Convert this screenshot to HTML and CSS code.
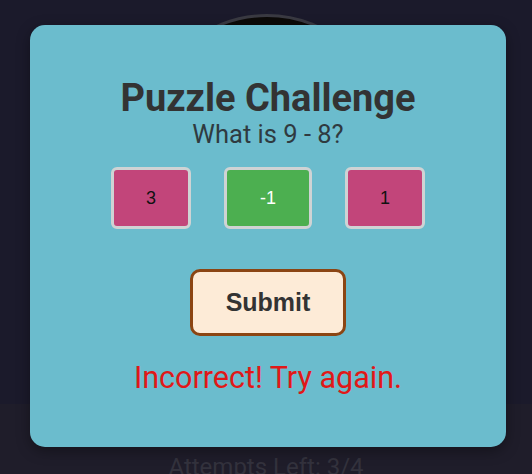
FILE: index.html
```html
<!DOCTYPE html>
<html>
<head>
<meta charset="utf-8">
<link rel="stylesheet" href="styles.css">
</head>
<body>
<div class="stage">
  <div class="board"><div class="disc"></div></div>
  <div class="footer">Attempts Left: 3/4</div>
</div>
<div class="overlay">
  <div class="modal">
    <h2 class="title">Puzzle Challenge</h2>
    <p class="question">What is 9 - 8?</p>
    <div class="options">
      <button class="opt">3</button>
      <button class="opt selected">-1</button>
      <button class="opt">1</button>
    </div>
    <button class="submit">Submit</button>
    <p class="message">Incorrect! Try again.</p>
  </div>
</div>
</body>
</html>
```
FILE: styles.css
```css
html, body {
  margin: 0;
  padding: 0;
  width: 532px;
  height: 474px;
  overflow: hidden;
  background: #1b1a2b;
  font-family: Roboto, "Liberation Sans", sans-serif;
}
.stage {
  height: 474px;
  display: flex;
  flex-direction: column;
}
.board {
  flex: 1;
  display: flex;
  justify-content: center;
  padding-top: 14px;
  padding-left: 2px;
}
.disc {
  width: 242px;
  height: 242px;
  border-radius: 50%;
  border: 3px solid #3a3a42;
  background: radial-gradient(circle at 45% 20%, #0c0a08 0%, #0c0a08 30%, #15141c 60%);
}
.footer {
  height: 70px;
  flex: none;
  background: #1f1d2a;
  color: #33323d;
  font-size: 24px;
  text-align: center;
  line-height: 28px;
  padding-top: 49px;
  box-sizing: border-box;
}
.overlay {
  position: absolute;
  inset: 0;
  display: flex;
  align-items: flex-start;
  padding: 25px 0 0 30px;
}
.modal {
  width: 476px;
  height: 422px;
  box-sizing: border-box;
  background: #6bbccd;
  border-radius: 15px;
  box-shadow: 0 4px 14px rgba(0, 0, 0, 0.35);
  display: flex;
  flex-direction: column;
  align-items: center;
  padding-top: 51px;
}
.title {
  margin: 0;
  font-size: 38px;
  font-weight: 700;
  color: #333333;
  line-height: 44px;
}
.question {
  margin: -1px 0 0;
  font-size: 25.5px;
  color: #2f3a40;
  line-height: 30px;
}
.options {
  display: flex;
  gap: 33px;
  margin-top: 18px;
}
.opt {
  font-family: "Liberation Sans", Arial, sans-serif;
  font-size: 18px;
  line-height: 21px;
  height: 62px;
  padding: 0 32px;
  border: 3px solid #cfd3d4;
  border-radius: 6px;
  background: #c2457a;
  color: #111;
}
.opt.selected {
  background: #4caf50;
  color: #fff;
  padding: 0 33px;
}
.submit {
  margin-top: 40px;
  font-family: "Liberation Sans", Arial, sans-serif;
  font-weight: 700;
  font-size: 25px;
  width: 156px;
  height: 67px;
  border: 3px solid #8b4513;
  border-radius: 10px;
  background: #fdebd7;
  color: #333;
}
.message {
  margin: 24px 0 0;
  font-size: 30.5px;
  line-height: 36px;
  color: #e01818;
}
```
